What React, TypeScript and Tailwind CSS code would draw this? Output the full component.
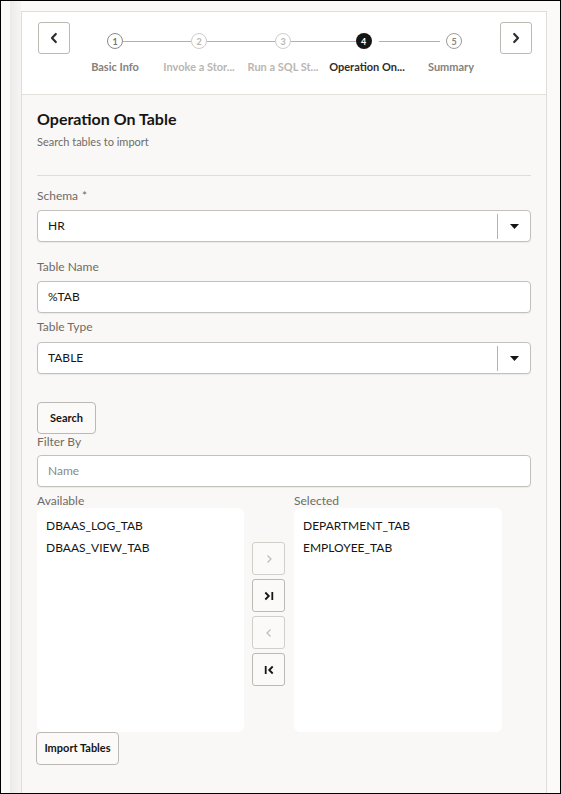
import React from "react";

const font = { fontFamily: "Lato, 'Noto Sans', sans-serif" };

type Step = { n: number; label: string; state: "done" | "muted" | "active" | "next" };

const steps: Step[] = [
  { n: 1, label: "Basic Info", state: "done" },
  { n: 2, label: "Invoke a Stor...", state: "muted" },
  { n: 3, label: "Run a SQL St...", state: "muted" },
  { n: 4, label: "Operation On...", state: "active" },
  { n: 5, label: "Summary", state: "next" },
];

function Chevron({ dir, className }: { dir: "left" | "right"; className?: string }) {
  return (
    <svg width="10" height="12" viewBox="0 0 10 12" className={className}>
      <path
        d={dir === "left" ? "M6.8 2 L3 6 L6.8 10" : "M3.2 2 L7 6 L3.2 10"}
        fill="none"
        stroke="currentColor"
        strokeWidth="2.2"
        strokeLinecap="round"
        strokeLinejoin="round"
      />
    </svg>
  );
}

function StepCircle({ step }: { step: Step }) {
  if (step.state === "active") {
    return (
      <div className="w-[16px] h-[16px] rounded-full bg-[#161513] text-white text-[9px] font-bold flex items-center justify-center leading-none">
        {step.n}
      </div>
    );
  }
  const cls =
    step.state === "done"
      ? "border-[#8d8984] text-[#7a7671]"
      : step.state === "next"
        ? "border-[#9e9a95] text-[#86827d]"
        : "border-[#cfccc8] text-[#b9b5b0]";
  return (
    <div
      className={`w-[16px] h-[16px] rounded-full border-[1.5px] bg-white text-[9px] font-bold flex items-center justify-center leading-none ${cls}`}
    >
      {step.n}
    </div>
  );
}

function Train() {
  return (
    <div className="flex ml-[3px] mt-[3px]">
      {steps.map((s, i) => {
        const labelCls =
          s.state === "active"
            ? "text-[#312d2a] font-bold"
            : s.state === "muted"
              ? "text-[#bab6b1] font-bold"
              : "text-[#85817c] font-bold";
        return (
          <div key={s.n} className="w-[84px] flex flex-col items-center">
            <div className="w-full h-[32px] flex items-center">
              <div
                className={`flex-1 h-px ${i === 0 ? "" : "bg-[#b3afaa]"} ${s.n === 5 ? "mr-[6px]" : ""}`}
              />
              <StepCircle step={s} />
              <div
                className={`flex-1 h-px ${i === steps.length - 1 ? "" : "bg-[#b3afaa]"} ${s.n === 4 ? "ml-[7px]" : ""}`}
              />
            </div>
            <div className={`text-[11px] leading-[14px] mt-[3px] whitespace-nowrap ${labelCls}`}>
              {s.label}
            </div>
          </div>
        );
      })}
    </div>
  );
}

function Label({ children, required }: { children: React.ReactNode; required?: boolean }) {
  return (
    <div className="h-[14px] leading-[14px] text-[12px] text-[#6f6b66]">
      {children}
      {required && <span className="ml-[4px] text-[#6f6b66]">*</span>}
    </div>
  );
}

function TextBox({ value, placeholder }: { value?: string; placeholder?: string }) {
  return (
    <div className="h-[32px] w-[494px] rounded-[4px] border border-[#c4c1bd] bg-white shadow-[0_1px_1px_rgba(0,0,0,0.06)] flex items-center pl-[10px] text-[12px]">
      {value ? (
        <span className="text-[#161513]">{value}</span>
      ) : (
        <span className="text-[#8c8884]">{placeholder}</span>
      )}
    </div>
  );
}

function SelectBox({ value }: { value: string }) {
  return (
    <div className="h-[32px] w-[494px] rounded-[4px] border border-[#c4c1bd] bg-white shadow-[0_1px_1px_rgba(0,0,0,0.06)] flex items-center text-[12px]">
      <span className="flex-1 pl-[10px] text-[#161513]">{value}</span>
      <div className="w-px h-[25px] bg-[#b5b1ac]" />
      <div className="w-[32px] flex items-center justify-center">
        <svg width="9" height="5" viewBox="0 0 9 5">
          <path d="M0 0 H9 L4.5 5 Z" fill="#161513" />
        </svg>
      </div>
    </div>
  );
}

function Button({ children, className = "" }: { children: React.ReactNode; className?: string }) {
  return (
    <button
      className={`rounded-[4px] border border-[#bcb8b3] bg-[#fbfaf9] text-[11px] font-bold text-[#161513] flex items-center justify-center ${className}`}
      style={font}
    >
      {children}
    </button>
  );
}

function ShuttleButton({ kind }: { kind: "add" | "addAll" | "remove" | "removeAll" }) {
  const disabled = kind === "add" || kind === "remove";
  const color = disabled ? "#bfbbb6" : "#161513";
  return (
    <div
      className={`w-[33px] h-[33px] rounded-[3px] border bg-[#fbfaf9] flex items-center justify-center ${
        disabled ? "border-[#d2cfcb]" : "border-[#bcb8b3]"
      }`}
    >
      <svg width="12" height="12" viewBox="0 0 12 12">
        {kind === "add" && (
          <path d="M4.5 2.5 L8 6 L4.5 9.5" fill="none" stroke={color} strokeWidth="1.2" />
        )}
        {kind === "remove" && (
          <path d="M7.5 2.5 L4 6 L7.5 9.5" fill="none" stroke={color} strokeWidth="1.2" />
        )}
        {kind === "addAll" && (
          <g fill="none" stroke={color} strokeWidth="1.8">
            <path d="M2.3 2.5 L5.8 6 L2.3 9.5" />
            <path d="M9.3 2 V10" />
          </g>
        )}
        {kind === "removeAll" && (
          <g fill="none" stroke={color} strokeWidth="1.8">
            <path d="M9.7 2.5 L6.2 6 L9.7 9.5" />
            <path d="M2.7 2 V10" />
          </g>
        )}
      </svg>
    </div>
  );
}

function ListBox({ items, width }: { items: string[]; width: string }) {
  return (
    <div className={`${width} h-[224px] rounded-[6px] bg-white pt-[7px] pl-[9px]`}>
      {items.map((it) => (
        <div key={it} className="h-[22px] leading-[22px] text-[12px] text-[#161513]">
          {it}
        </div>
      ))}
    </div>
  );
}

export default function App() {
  return (
    <div
      className="w-[561px] h-[794px] border border-black bg-[#fbfaf9] overflow-hidden flex"
      style={font}
    >
      <div className="w-[9px] shrink-0" />
      <div className="w-[11px] shrink-0 bg-gradient-to-r from-[#ecebe9] to-[#f6f5f3]" />
      <div className="w-[526px] shrink-0 mt-[10px] border-l border-t border-r border-[#e0ddd9] bg-[#f9f8f6] flex flex-col">
        <div className="h-[83px] bg-white border-b border-[#e3e0dc] flex items-start pt-[10px] pl-[16px] pr-[14px]">
          <div className="w-[32px] h-[32px] rounded-[3px] border border-[#bcb8b3] bg-white flex items-center justify-center text-[#312d2a]">
            <Chevron dir="left" />
          </div>
          <div className="flex-1">
            <Train />
          </div>
          <div className="w-[32px] h-[32px] rounded-[3px] border border-[#bcb8b3] bg-white flex items-center justify-center text-[#312d2a]">
            <Chevron dir="right" />
          </div>
        </div>

        <div className="pl-[15px] pr-[15px]">
          <div className="mt-[14px] h-[20px] leading-[20px] text-[16px] font-bold text-[#161513]">
            Operation On Table
          </div>
          <div className="mt-[6px] h-[14px] leading-[14px] text-[11px] text-[#6f6b66]">
            Search tables to import
          </div>
          <div className="mt-[26px] w-[494px] border-t border-[#e0ddd9]" />

          <div className="mt-[13px]">
            <Label required>Schema</Label>
          </div>
          <div className="mt-[7px]">
            <SelectBox value="HR" />
          </div>

          <div className="mt-[18px]">
            <Label>Table Name</Label>
          </div>
          <div className="mt-[7px]">
            <TextBox value="%TAB" />
          </div>

          <div className="mt-[7px]">
            <Label>Table Type</Label>
          </div>
          <div className="mt-[8px]">
            <SelectBox value="TABLE" />
          </div>

          <div className="mt-[28px]">
            <Button className="w-[59px] h-[32px]">Search</Button>
          </div>

          <div className="mt-[1px]">
            <Label>Filter By</Label>
          </div>
          <div className="mt-[6px]">
            <TextBox placeholder="Name" />
          </div>

          <div className="mt-[7px] flex">
            <div className="w-[257px]">
              <Label>Available</Label>
            </div>
            <Label>Selected</Label>
          </div>
          <div className="flex">
            <ListBox width="w-[207px]" items={["DBAAS_LOG_TAB", "DBAAS_VIEW_TAB"]} />
            <div className="ml-[8px] mt-[34px] flex flex-col gap-[4px]">
              <ShuttleButton kind="add" />
              <ShuttleButton kind="addAll" />
              <ShuttleButton kind="remove" />
              <ShuttleButton kind="removeAll" />
            </div>
            <div className="ml-[9px]">
              <ListBox width="w-[208px]" items={["DEPARTMENT_TAB", "EMPLOYEE_TAB"]} />
            </div>
          </div>
          <Button className="w-[83px] h-[33px] -ml-[1px]">Import Tables</Button>
        </div>
      </div>
      <div className="flex-1" />
    </div>
  );
}
